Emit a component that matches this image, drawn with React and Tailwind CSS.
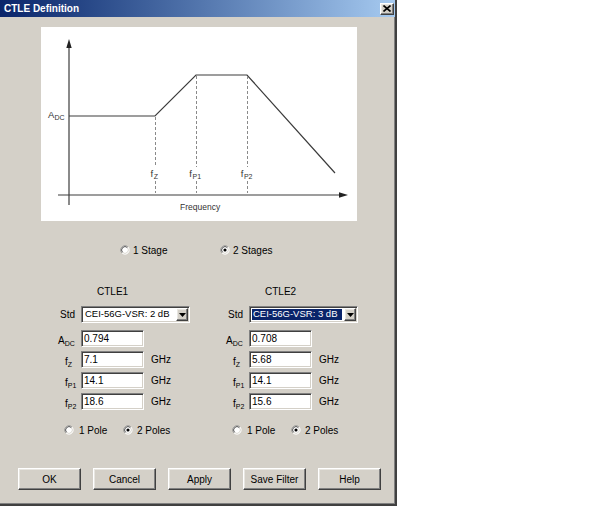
import React from "react";

const sunken =
  "border border-t-[#808080] border-l-[#808080] border-b-white border-r-white shadow-[inset_1px_1px_0_#404040,inset_-1px_-1px_0_#d4d0c8] bg-white";
const raised =
  "border border-t-white border-l-white border-r-[#404040] border-b-[#404040] shadow-[inset_-1px_-1px_0_#808080,inset_1px_1px_0_#e8e6e1] bg-[#d4d0c8]";

function Radio({ checked }) {
  return (
    <svg width="10" height="10" viewBox="0 0 12 12" className="shrink-0">
      <circle cx="6" cy="6" r="5" fill="#fff" />
      <path d="M2.46 9.54 A5 5 0 0 1 9.54 2.46" fill="none" stroke="#808080" strokeWidth="1" />
      <path d="M9.54 2.46 A5 5 0 0 1 2.46 9.54" fill="none" stroke="#ffffff" strokeWidth="1" />
      <path d="M3.17 8.83 A4 4 0 0 1 8.83 3.17" fill="none" stroke="#404040" strokeWidth="1" />
      <path d="M8.83 3.17 A4 4 0 0 1 3.17 8.83" fill="none" stroke="#d4d0c8" strokeWidth="1" />
      {checked && <circle cx="6" cy="6" r="1.9" fill="#000" />}
    </svg>
  );
}

function Sym({ base, sub }) {
  return (
    <span className="text-[10px] leading-none whitespace-nowrap">
      {base}
      <span className="text-[7px] relative top-[2px]">{sub}</span>
    </span>
  );
}

function Chart() {
  const ff = "Liberation Sans, Arial, sans-serif";
  return (
    <div className="ml-[41px] mt-[10px] w-[316px] h-[194px] bg-white">
      <svg width="316" height="194" viewBox="0 0 316 194">
        <g stroke="#3c3c3c" strokeWidth="1.2" fill="none">
          <line x1="28" y1="19" x2="28" y2="178" />
          <line x1="17" y1="168" x2="300" y2="168" />
          <polyline points="28,89 114,89 155,48 206,48 294,146" />
        </g>
        <polygon points="28,12 25.3,21 30.7,21" fill="#222" />
        <polygon points="307,168 298,165.3 298,170.7" fill="#222" />
        <g stroke="#8a8a8a" strokeWidth="1" strokeDasharray="3,2">
          <line x1="114.5" y1="90" x2="114.5" y2="140" />
          <line x1="114.5" y1="154" x2="114.5" y2="166" />
          <line x1="155.5" y1="49" x2="155.5" y2="140" />
          <line x1="155.5" y1="154" x2="155.5" y2="166" />
          <line x1="206.5" y1="49" x2="206.5" y2="140" />
          <line x1="206.5" y1="154" x2="206.5" y2="166" />
        </g>
        <g fill="#333" fontFamily={ff}>
          <text x="7" y="91" fontSize="9.5">A</text>
          <text x="13.5" y="93" fontSize="7">DC</text>
          <text x="109.5" y="150" fontSize="9.5">f</text>
          <text x="112.7" y="152" fontSize="7">Z</text>
          <text x="148.3" y="150" fontSize="9.5">f</text>
          <text x="151.5" y="152" fontSize="7">P1</text>
          <text x="199.7" y="150" fontSize="9.5">f</text>
          <text x="202.9" y="152" fontSize="7">P2</text>
          <text x="139" y="183" fontSize="8.5">Frequency</text>
        </g>
      </svg>
    </div>
  );
}

function Select({ value, selected }) {
  return (
    <div className={`w-[109px] h-[17px] ${sunken} flex items-stretch p-[1px]`}>
      <div className="flex-1 flex items-stretch p-[1px] pr-[2px]">
        {selected ? (
          <div className="flex-1 bg-[#0a246a] text-white flex items-center pl-[1px] text-[9.5px] whitespace-nowrap overflow-hidden">
            {value}
          </div>
        ) : (
          <div className="flex-1 flex items-center pl-[1px] text-[9.5px] whitespace-nowrap overflow-hidden">{value}</div>
        )}
      </div>
      <div className={`w-[12px] shrink-0 ${raised} flex items-center justify-center`}>
        <svg width="7" height="4" viewBox="0 0 7 4">
          <polygon points="0,0 7,0 3.5,4" fill="#000" />
        </svg>
      </div>
    </div>
  );
}

function Field({ label, value, pl, mt }) {
  return (
    <div className={`flex items-center h-[17px] ${mt}`}>
      <div className={`w-[31px] shrink-0 ${pl}`}>{label}</div>
      <div className={`w-[63px] h-[17px] ${sunken} flex items-center pl-[2px] text-[10px]`}>{value}</div>
      <span className="ml-[7px] text-[10px]">GHz</span>
    </div>
  );
}

function Column({ title, std, selected, vals }) {
  return (
    <div className="w-[168px] flex flex-col">
      <div className="h-[13px] mt-[28px] pl-[47px] text-[10px] leading-[13px]">{title}</div>
      <div className="flex items-center h-[17px] mt-[8px]">
        <div className="w-[31px] shrink-0 pl-[10px] text-[10px]">Std</div>
        <Select value={std} selected={selected} />
      </div>
      <div className="flex items-center h-[17px] mt-[7px]">
        <div className="w-[31px] shrink-0 pl-[8px]">
          <Sym base="A" sub="DC" />
        </div>
        <div className={`w-[63px] h-[17px] ${sunken} flex items-center pl-[2px] text-[10px]`}>{vals[0]}</div>
      </div>
      <Field label={<Sym base="f" sub="Z" />} value={vals[1]} pl="pl-[15px]" mt="mt-[4px]" />
      <Field label={<Sym base="f" sub="P1" />} value={vals[2]} pl="pl-[15px]" mt="mt-[4px]" />
      <Field label={<Sym base="f" sub="P2" />} value={vals[3]} pl="pl-[15px]" mt="mt-[4px]" />
      <div className="flex items-center h-[14px] mt-[13px] pl-[14px] text-[10px]">
        <div className="w-[59px] flex items-center gap-[5px]">
          <Radio />
          <span>1 Pole</span>
        </div>
        <div className="flex items-center gap-[4px]">
          <Radio checked />
          <span>2 Poles</span>
        </div>
      </div>
    </div>
  );
}

function Button({ children }) {
  return (
    <div className={`w-[63px] h-[22px] ${raised} flex items-center justify-center text-[10px]`}>{children}</div>
  );
}

export default function App() {
  return (
    <div className="w-[600px] h-[507px] bg-white font-['Liberation_Sans',Arial,sans-serif] text-black">
      <div className="w-[397px] h-[506px] bg-[#d4d0c8] border-r-2 border-b-2 border-r-[#404040] border-b-[#404040] shadow-[inset_-1px_-1px_0_#808080] flex flex-col">
        <div className="h-[17px] bg-linear-to-r from-[#0a246a] to-[#a6caf0] flex items-center justify-between pl-[4px] pr-[1px]">
          <span className="text-white font-bold text-[10px]">CTLE Definition</span>
          <div className={`w-[14px] h-[12px] ${raised} flex items-center justify-center`}>
            <svg width="8" height="7" viewBox="0 0 8 7">
              <path d="M0.5 0.5 L7.5 6.5 M7.5 0.5 L0.5 6.5" stroke="#000" strokeWidth="1.6" />
            </svg>
          </div>
        </div>
        <Chart />
        <div className="flex items-center h-[14px] mt-[22px] pl-[120px] text-[10px]">
          <div className="w-[100px] flex items-center gap-[3px]">
            <Radio />
            <span>1 Stage</span>
          </div>
          <div className="flex items-center gap-[3px]">
            <Radio checked />
            <span>2 Stages</span>
          </div>
        </div>
        <div className="flex pl-[50px]">
          <Column title="CTLE1" std="CEI-56G-VSR: 2 dB" vals={["0.794", "7.1", "14.1", "18.6"]} />
          <Column title="CTLE2" std="CEI-56G-VSR: 3 dB" selected vals={["0.708", "5.68", "14.1", "15.6"]} />
        </div>
        <div className="flex mt-[31px] pl-[18px] gap-[12px]">
          <Button>OK</Button>
          <Button>Cancel</Button>
          <Button>Apply</Button>
          <Button>Save Filter</Button>
          <Button>Help</Button>
        </div>
      </div>
    </div>
  );
}
